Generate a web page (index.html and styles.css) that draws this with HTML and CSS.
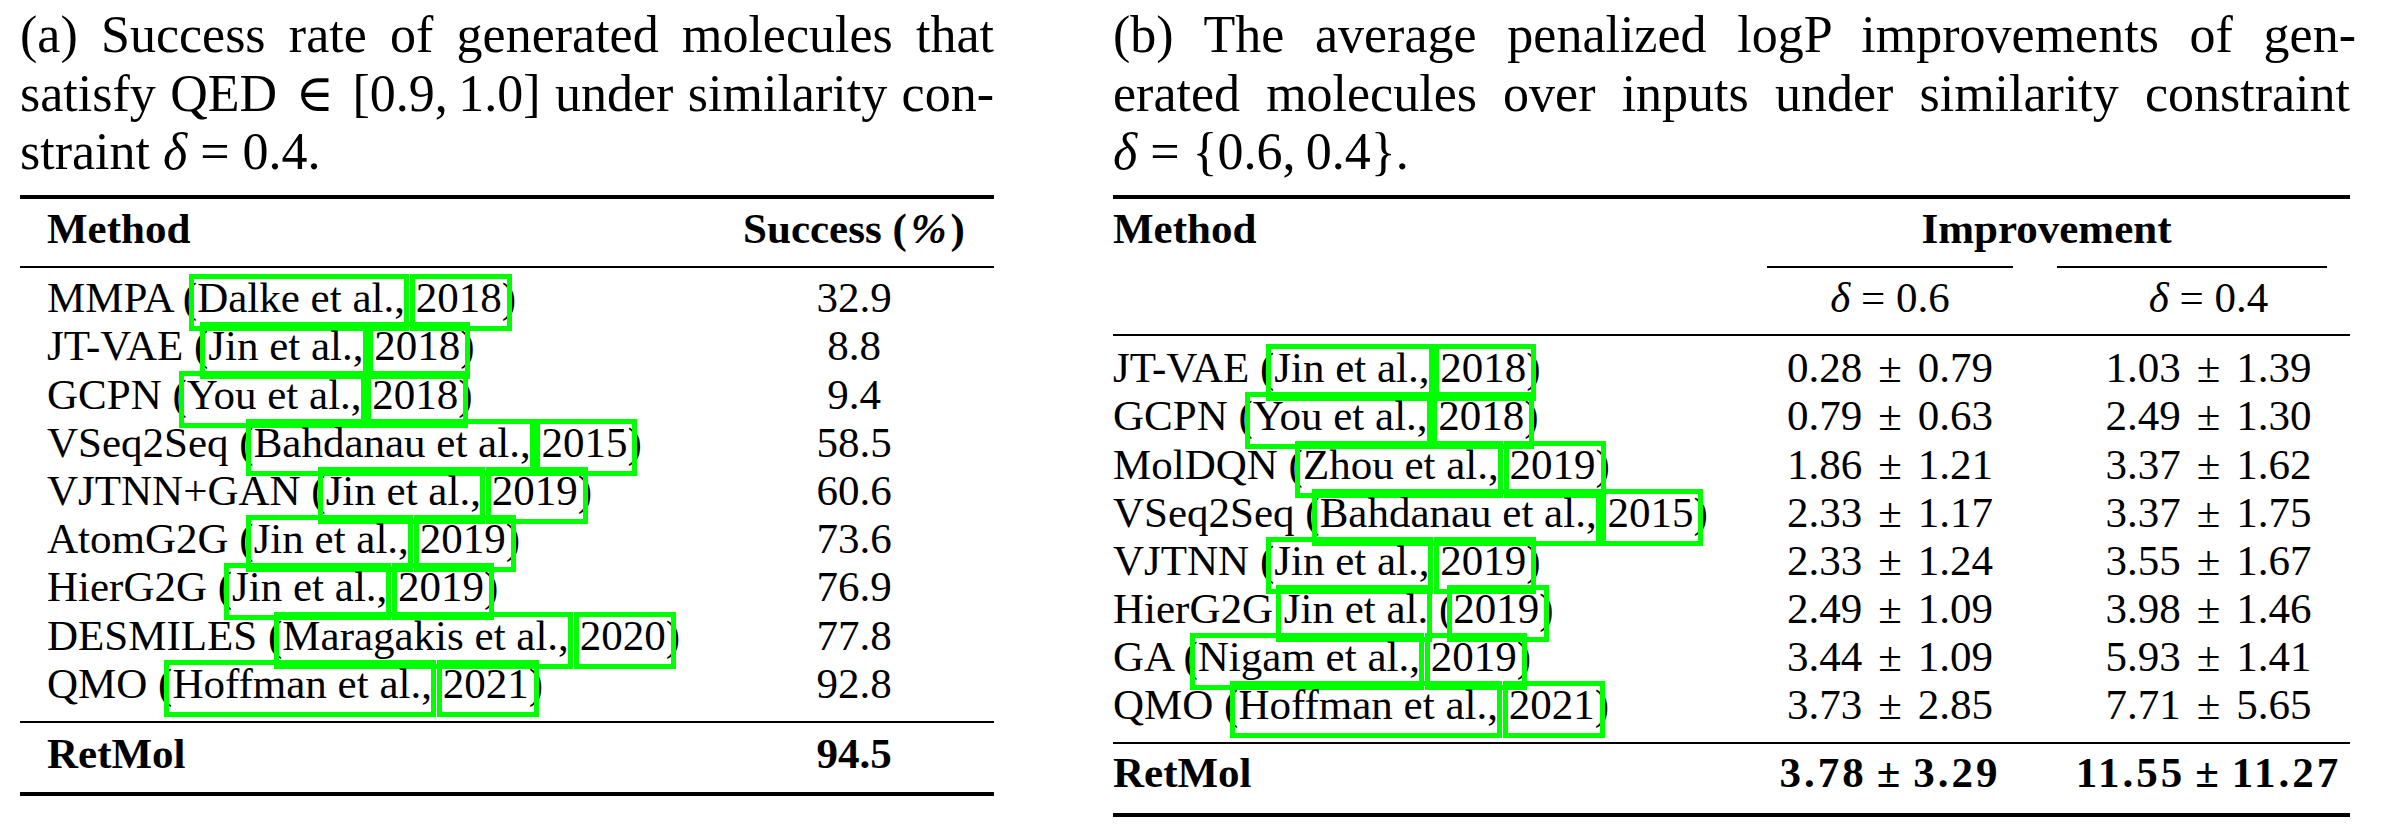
FILE: index.html
```html
<!DOCTYPE html>
<html lang="en">
<head>
<meta charset="utf-8">
<title>RetMol results tables</title>
<link rel="stylesheet" href="styles.css">
</head>
<body>
<div class="page">
  <section class="panel panel-a">
    <div class="caption">
      <div class="cap-line">(a) Success rate of generated molecules that</div>
      <div class="cap-line">satisfy QED <span class="rel">∈</span> [0.9,&thinsp;1.0] under similarity con-</div>
      <div class="cap-line last">straint <i>δ</i> = 0.4.</div>
    </div>
    <div class="tbl tbl-a">
      <div class="rule thick r-top"></div>
      <div class="row head bold">
        <div class="c-method">Method</div>
        <div class="c-num">Success (<i class="pct">%</i>)</div>
      </div>
      <div class="rule thin r-mid1"></div>
      <div class="body">
        <div class="row"><div class="c-method">MMPA (<span class="cite au">Dalke et al.,</span> <span class="cite yr">2018</span>)</div><div class="c-num">32.9</div></div>
        <div class="row"><div class="c-method">JT-VAE (<span class="cite au">Jin et al.,</span> <span class="cite yr">2018</span>)</div><div class="c-num">8.8</div></div>
        <div class="row"><div class="c-method">GCPN (<span class="cite au">You et al.,</span> <span class="cite yr">2018</span>)</div><div class="c-num">9.4</div></div>
        <div class="row"><div class="c-method">VSeq2Seq (<span class="cite au">Bahdanau et al.,</span> <span class="cite yr">2015</span>)</div><div class="c-num">58.5</div></div>
        <div class="row"><div class="c-method">VJTNN+GAN (<span class="cite au">Jin et al.,</span> <span class="cite yr">2019</span>)</div><div class="c-num">60.6</div></div>
        <div class="row"><div class="c-method">AtomG2G (<span class="cite au">Jin et al.,</span> <span class="cite yr">2019</span>)</div><div class="c-num">73.6</div></div>
        <div class="row"><div class="c-method">HierG2G (<span class="cite au">Jin et al.,</span> <span class="cite yr">2019</span>)</div><div class="c-num">76.9</div></div>
        <div class="row"><div class="c-method">DESMILES (<span class="cite au">Maragakis et al.,</span> <span class="cite yr">2020</span>)</div><div class="c-num">77.8</div></div>
        <div class="row"><div class="c-method">QMO (<span class="cite au">Hoffman et al.,</span> <span class="cite yr">2021</span>)</div><div class="c-num">92.8</div></div>
      </div>
      <div class="rule thin r-mid2"></div>
      <div class="row total bold">
        <div class="c-method">RetMol</div>
        <div class="c-num">94.5</div>
      </div>
      <div class="rule thick r-bot"></div>
    </div>
  </section>

  <section class="panel panel-b">
    <div class="caption">
      <div class="cap-line hang">(b) The average penalized logP improvements of gen-</div>
      <div class="cap-line">erated molecules over inputs under similarity constraint</div>
      <div class="cap-line last"><i>δ</i> = {0.6,&thinsp;0.4}.</div>
    </div>
    <div class="tbl tbl-b">
      <div class="rule thick r-top"></div>
      <div class="row head bold">
        <div class="c-method">Method</div>
        <div class="c-num span2">Improvement</div>
      </div>
      <div class="row cmid">
        <div></div>
        <div class="cm cm1"></div>
        <div class="cm cm2"></div>
      </div>
      <div class="row subhead">
        <div></div>
        <div class="c-num"><i>δ</i> = 0.6</div>
        <div class="c-num"><i>δ</i> = 0.4</div>
      </div>
      <div class="rule thin r-mid1"></div>
      <div class="body">
        <div class="row"><div class="c-method">JT-VAE (<span class="cite au">Jin et al.,</span> <span class="cite yr">2018</span>)</div><div class="c-num">0.28<span class="pm">±</span>0.79</div><div class="c-num">1.03<span class="pm">±</span>1.39</div></div>
        <div class="row"><div class="c-method">GCPN (<span class="cite au">You et al.,</span> <span class="cite yr">2018</span>)</div><div class="c-num">0.79<span class="pm">±</span>0.63</div><div class="c-num">2.49<span class="pm">±</span>1.30</div></div>
        <div class="row"><div class="c-method">MolDQN (<span class="cite au">Zhou et al.,</span> <span class="cite yr">2019</span>)</div><div class="c-num">1.86<span class="pm">±</span>1.21</div><div class="c-num">3.37<span class="pm">±</span>1.62</div></div>
        <div class="row"><div class="c-method">VSeq2Seq (<span class="cite au">Bahdanau et al.,</span> <span class="cite yr">2015</span>)</div><div class="c-num">2.33<span class="pm">±</span>1.17</div><div class="c-num">3.37<span class="pm">±</span>1.75</div></div>
        <div class="row"><div class="c-method">VJTNN (<span class="cite au">Jin et al.,</span> <span class="cite yr">2019</span>)</div><div class="c-num">2.33<span class="pm">±</span>1.24</div><div class="c-num">3.55<span class="pm">±</span>1.67</div></div>
        <div class="row"><div class="c-method">HierG2G <span class="cite au">Jin et al.</span> (<span class="cite yr">2019</span>)</div><div class="c-num">2.49<span class="pm">±</span>1.09</div><div class="c-num">3.98<span class="pm">±</span>1.46</div></div>
        <div class="row"><div class="c-method">GA (<span class="cite au">Nigam et al.,</span> <span class="cite yr">2019</span>)</div><div class="c-num">3.44<span class="pm">±</span>1.09</div><div class="c-num">5.93<span class="pm">±</span>1.41</div></div>
        <div class="row"><div class="c-method">QMO (<span class="cite au">Hoffman et al.,</span> <span class="cite yr">2021</span>)</div><div class="c-num">3.73<span class="pm">±</span>2.85</div><div class="c-num">7.71<span class="pm">±</span>5.65</div></div>
      </div>
      <div class="rule thin r-mid2"></div>
      <div class="row total bold">
        <div class="c-method">RetMol</div>
        <div class="c-num wide">3.78<span class="pm">±</span>3.29</div>
        <div class="c-num wide">11.55<span class="pm">±</span>11.27</div>
      </div>
      <div class="rule thick r-bot"></div>
    </div>
  </section>
</div>
</body>
</html>
```

FILE: styles.css
```css
* { box-sizing: border-box; }

html, body {
  margin: 0;
  padding: 0;
  background: #ffffff;
}

body {
  font-family: "Liberation Serif", "DejaVu Serif", serif;
  color: #000000;
}

.page {
  display: flex;
  align-items: flex-start;
  gap: 119px;
  padding: 6px 0 0 20px;
}

.panel-a { width: 974px; }
.panel-b { width: 1237px; }

/* Captions */
.caption {
  font-size: 52px;
  line-height: 58.5px;
}

.cap-line {
  text-align: justify;
  text-align-last: justify;
}

.cap-line.last { text-align-last: left; }
.cap-line.hang { margin-right: -6px; }

.rel { margin: 0 4px; }

/* Tables */
.tbl {
  font-size: 43px;
  line-height: 48.2px;
}

.bold { font-weight: bold; }

.rule { background: #000000; }
.rule.thick { height: 4px; }
.rule.thin { height: 2px; }

.row { display: grid; }

.c-method { white-space: nowrap; }
.c-num { text-align: center; white-space: nowrap; }

.pct { margin: 0 4px; }

.tbl-a .row { grid-template-columns: 1fr 280px; }
.tbl-a .c-method { padding-left: 27px; }

.tbl-b .row {
  grid-template-columns: 1fr 270px 283px;
  column-gap: 42px;
}

.span2 {
  grid-column: 2 / 4;
  padding-right: 12px;
}

/* vertical rhythm (booktabs-like) */
.r-top { margin-top: 13.5px; }
.head { margin-top: 6px; }

.tbl-a .r-mid1 { margin-top: 13px; }
.tbl-a .body { margin-top: 6px; }
.tbl-a .r-mid2 { margin-top: 13.3px; }
.tbl-a .total { margin-top: 6.5px; }
.tbl-a .r-bot { margin-top: 13.5px; }

.tbl-b .cmid {
  margin-top: 13px;
  height: 2px;
}
.cm { background: #000000; height: 2px; }
.cm1 { margin: 0 12px; }
.cm2 { margin: 0 23px 0 -10px; }

.tbl-b .subhead { margin-top: 6px; }
.tbl-b .r-mid1 { margin-top: 12px; }
.tbl-b .body { margin-top: 7.9px; }
.tbl-b .body .row { line-height: 48.15px; }
.tbl-b .r-mid2 { margin-top: 12.7px; }
.tbl-b .total { margin-top: 5.1px; }
.tbl-b .r-bot { margin-top: 15px; }

.pm { margin: 0 16px; }

.wide { letter-spacing: 3px; }
.wide .pm { letter-spacing: 0; margin: 0 13px 0 10px; }

/* hyperref citation link boxes */
.cite { position: relative; }

.cite::after {
  content: "";
  position: absolute;
  top: 0;
  bottom: -10px;
  border: 5px solid #00ff00;
  pointer-events: none;
}

.cite.au::after { left: -8px; right: -4px; }
.cite.yr::after { left: -6px; right: -10px; }
```
